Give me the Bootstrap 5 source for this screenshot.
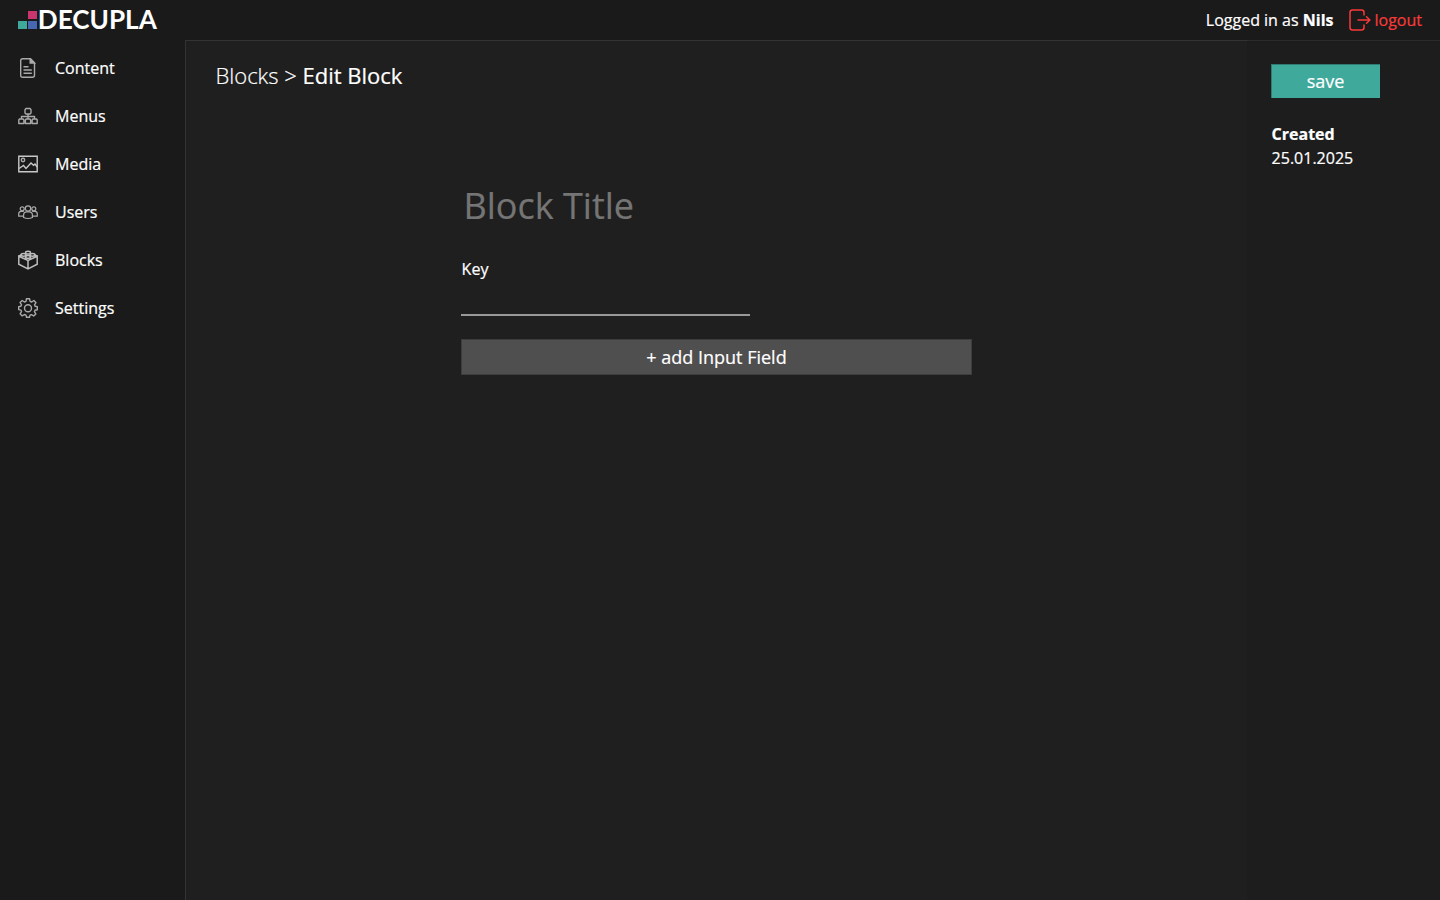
<!DOCTYPE html>
<html lang="en">
<head>
<meta charset="utf-8">
<title>Decupla – Edit Block</title>
<meta name="viewport" content="width=device-width, initial-scale=1">
<link href="https://cdn.jsdelivr.net/npm/bootstrap@5.3.0/dist/css/bootstrap.min.css" rel="stylesheet">
<style>
body{background:#1a1a1a;color:#fff;font-family:"Open Sans","Noto Sans",sans-serif;font-size:16px;line-height:24px;overflow:hidden;-webkit-text-stroke:.2px}
svg{display:block;flex:none}
.topbar{height:40px;padding:0 18px}
.wordmark{overflow:visible}
.wordmark text{font:700 26px Lato,sans-serif;fill:#fff;-webkit-text-stroke:1px #fff}
.logout,.logout:hover{color:#fa3a3a}
.sidebar{width:185px;padding:4px 0 0 18px;flex:none}
.sidebar .nav-link{height:48px;color:#fff;padding:0;gap:17px}
.sidebar svg{fill:none;stroke:#aaa;stroke-width:1.4}
.editor{background:#1f1f1f;border:1px solid #333;border-width:1px 0 0 1px;padding:19px 30px 0 29.5px}
.crumbs{font-size:22px;line-height:30px;font-weight:300}
.crumbs a{color:#fff}
.crumbs b{font-weight:500}
.block-form{width:511px;margin:88px 0 0 245.5px}
.title-input,.key-input{background:none;border:0;outline:0;color:#fff;display:block;border-radius:0}
.title-input{font-size:36px;line-height:52px;height:54px;padding:0 2px 0 2.5px;width:100%}
.title-input::placeholder{color:#757575;opacity:1}
.key-label{margin-top:25px;padding-left:.6px}
.key-input{width:289px;height:35px;border-bottom:2px solid #999}
.btn-add{margin-top:23px;height:36px;background:#4f4f4f;border:1px solid #3d3d3d;font-size:18px;line-height:24px;padding:0}
.inspector{width:193px;flex:none;background:#1d1d1d;border-top:1px solid #2b2b2b;padding:23px 0 0 24px}
.btn-save{width:109px;height:34px;background:#3fa99b;border:0;font-size:18px;line-height:24px;padding:0;box-shadow:inset 1px 1px #2f7c72}
.created{margin-top:24px;padding-left:.6px}
</style>
</head>
<body class="vh-100 d-flex flex-column">
<header class="topbar d-flex align-items-center justify-content-between">
  <svg class="wordmark" width="140" height="24" viewBox="0 0 140 24" role="img" aria-label="Decupla">
    <path fill="#c9356d" d="M10 3h9v8h-9z"/><path fill="#3fa99b" d="M0 13h9v8H0z"/><path fill="#4768b0" d="M10 13h9v8h-9z"/>
    <text x="19.800" y="21.300" textLength="119" lengthAdjust="spacingAndGlyphs">DECUPLA</text>
  </svg>
  <div class="d-flex align-items-center">
    <span>Logged in as <b>Nils</b></span>
    <a class="logout d-flex align-items-center text-decoration-none" href="#" style="margin-left:15px;gap:4px">
      <svg width="22" height="22" viewBox="0 0 22 22" fill="none" stroke="currentColor" stroke-width="1.5" stroke-linecap="round" stroke-linejoin="round"><path d="M15 6V3.500Q15 1 12.500 1h-9Q1 1 1 3.500v15Q1 21 3.500 21h9Q15 21 15 18.500V16M9 11h11.500M17.500 7.800l3.400 3.200-3.400 3.200"/></svg>
      <span>logout</span>
    </a>
  </div>
</header>
<div class="d-flex flex-grow-1">
  <nav class="sidebar nav flex-column flex-nowrap">
    <a class="nav-link d-flex align-items-center" href="#"><svg width="20" height="20" viewBox="0 0 20 20"><path d="M4.700.8h7.800l4 4v12.400q0 2-2 2H4.700q-2 0-2-2V2.800q0-2 2-2zM5.500 8.700h5M5.500 12h8.300M5.500 15.300h8.300"/><path fill="#aaa" d="M12.200 1v4h4.200z"/></svg>Content</a>
    <a class="nav-link d-flex align-items-center" href="#"><svg width="20" height="20" viewBox="0 0 20 20" stroke-linejoin="round"><path d="M8 2.500h4l1 1.200V7l-1 1H8L7 7V3.700zM10 8v5M3.500 13v-2.500h13V13M1.500 13h3.600l.8 1v3.500H.8V14zM8.200 13h3.600l.8 1v3.500H7.400V14zM14.900 13h3.600l.7 1v3.500h-5.100V14z"/></svg>Menus</a>
    <a class="nav-link d-flex align-items-center" href="#"><svg width="20" height="20" viewBox="0 0 20 20"><path stroke="#c8c8c8" d="M.8 2.200h18.400v15.600H.8z"/><circle cx="5" cy="6" r="1.700"/><path stroke="#c8c8c8" d="M1 14.500l4.500-3 2.500 3 5-5.500 2.500 2.300L17 10l2.200 3"/></svg>Media</a>
    <a class="nav-link d-flex align-items-center" href="#"><svg width="20" height="20" viewBox="0 0 20 20" style="stroke-width:1.200"><circle cx="10" cy="6.500" r="2.700"/><circle cx="4.200" cy="6.800" r="2"/><circle cx="15.800" cy="6.800" r="2"/><path d="M5.600 15.500V13q0-3.200 3-3.200h2.800q3 0 3 3.200v2.500q-4.400 2-8.800 0zM5 14.200H.7V12q0-2.700 2.600-2.700h2.500M15 14.200h4.300V12q0-2.700-2.600-2.700h-2.500"/></svg>Users</a>
    <a class="nav-link d-flex align-items-center" href="#"><svg width="20" height="20" viewBox="0 0 20 20" style="stroke-width:1.500;stroke:#bdbdbd"><path d="M.8 6.200L10 10.500l9.200-4.300v8L10 18.800.8 14.200zM10 10.500v8.300M1 6l3-1.300M19 6l-3-1.300"/><ellipse cx="10" cy="2.700" rx="2.500" ry="1.400"/><ellipse cx="5.500" cy="4.800" rx="2.500" ry="1.400"/><ellipse cx="14.500" cy="4.800" rx="2.500" ry="1.400"/><ellipse cx="10" cy="6.900" rx="2.500" ry="1.400"/><path d="M3 5v1.800M8 5v1.500M12 5v1.500M17 5v1.800M7.500 7v1.800M12.500 7v1.800"/></svg>Blocks</a>
    <a class="nav-link d-flex align-items-center" href="#"><svg width="20" height="20" viewBox="0 0 20 20" stroke-linejoin="round"><path d="M8.400.8h3.200l.5 2.500 1.600.7 2.200-1.500 2.100 2.200L16.500 6.800l.6 1.500 2.200.4v3l-2.300.5-.6 1.500 1.400 2.200-2.100 2.100-2.200-1.400-1.500.6-.5 2.100h-3L8 17.100l-1.600-.6-2.200 1.400-2.100-2.100 1.400-2.200-.6-1.500-2.200-.5v-3l2.200-.4.6-1.500L2.100 4.600l2.100-2.100L6.400 4 8 3.300z"/><circle cx="10" cy="10.200" r="3.500"/></svg>Settings</a>
  </nav>
  <main class="editor flex-grow-1">
    <div class="crumbs"><a href="#" class="text-decoration-none">Blocks</a> &gt; <b>Edit Block</b></div>
    <form class="block-form">
      <input class="title-input" type="text" placeholder="Block Title" aria-label="Block title">
      <label class="key-label d-block" for="key">Key</label>
      <input class="key-input" id="key" type="text">
      <button type="button" class="btn-add btn w-100 rounded-0 text-white">+ add Input Field</button>
    </form>
  </main>
  <aside class="inspector">
    <button type="button" class="btn-save btn rounded-0 text-white">save</button>
    <div class="created"><b>Created</b><div>25.01.2025</div></div>
  </aside>
</div>
<script src="https://cdn.jsdelivr.net/npm/bootstrap@5.3.0/dist/js/bootstrap.bundle.min.js"></script>
</body>
</html>
